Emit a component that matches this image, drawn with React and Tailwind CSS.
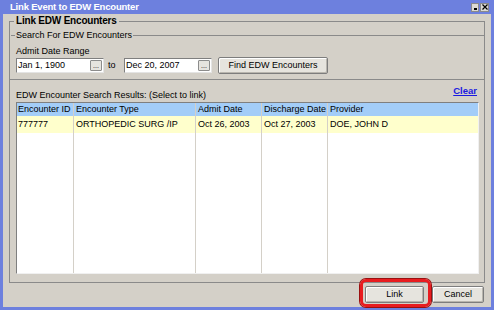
import { useState } from "react";

const font = { fontFamily: '"Liberation Sans", Arial, sans-serif' };

function DateField({ value }) {
  return (
    <div className="flex h-[15px] w-[88px] items-stretch border border-t-[#7f7f7f] border-l-[#7f7f7f] border-r-[#e4e4e4] border-b-[#e4e4e4] bg-white">
      <span className="flex-1 pl-[1px] leading-[13px]">{value}</span>
      <span className="my-[1px] mr-[1px] flex w-[12px] items-center justify-center rounded-[1px] border border-[#8c8c8c] bg-[#e6e4df] text-[7px] leading-none">
        ...
      </span>
    </div>
  );
}

function Btn({ children, className = "" }) {
  return (
    <button
      className={
        "h-[17px] rounded-[2px] border border-[#7d7d7d] bg-[#e6e4de] text-center text-[9px] leading-[15px] text-black shadow-[inset_1px_1px_0_#fff,inset_-1px_-1px_0_#b8b5ae] " +
        className
      }
    >
      {children}
    </button>
  );
}

const columns = [
  { label: "Encounter ID", value: "777777", w: "w-[57px] pl-[1px]" },
  { label: "Encounter Type", value: "ORTHOPEDIC SURG /IP", w: "w-[122px] pl-[2px]" },
  { label: "Admit Date", value: "Oct 26, 2003", w: "w-[66px] pl-[2px]" },
  { label: "Discharge Date", value: "Oct 27, 2003", w: "w-[66px] pl-[2px]" },
  { label: "Provider", value: "DOE, JOHN D", w: "flex-1 pl-[2px]" },
];

export default function App() {
  const [selected, setSelected] = useState(0);

  return (
    <div
      className="flex h-[310px] w-[494px] flex-col bg-[#6d80de] px-[3px] pb-[3px] text-[9px] text-black"
      style={font}
    >
      {/* title bar */}
      <div className="flex h-[14px] items-center justify-between pl-[7px] pr-[2px]">
        <span className="text-[9.5px] font-bold tracking-[-0.2px] text-white">
          Link Event to EDW Encounter
        </span>
        <div className="flex gap-[1px]">
          <span className="flex h-[9px] w-[8px] items-end justify-center border border-[#8a8a8a] bg-[#dcdad4] pb-[1px]">
            <span className="h-[2px] w-[3px] bg-black" />
          </span>
          <span className="flex h-[9px] w-[9px] items-center justify-center border border-[#8a8a8a] bg-[#dcdad4]">
            <svg width="6" height="6" viewBox="0 0 6 6">
              <path d="M0.5 0.5 L5.5 5.5 M5.5 0.5 L0.5 5.5" stroke="#000" strokeWidth="1.2" />
            </svg>
          </span>
        </div>
      </div>

      {/* body */}
      <div className="flex flex-1 flex-col bg-[#d4d0c8] px-[6px]">
        <fieldset className="m-0 flex min-w-0 flex-1 flex-col border border-[#8a8a8a] pb-[8px] pl-[6px] pr-[5px]">
          <legend className="-ml-[2px] px-[2px] text-[10px] font-bold leading-[14px] tracking-[-0.2px]">
            Link EDW Encounters
          </legend>

          <div className="-ml-[5px] -mr-[5px] mt-[1px] flex h-[13px] items-center">
            <div className="h-px w-[4px] bg-[#8a8a8a]" />
            <span className="px-[1px]">Search For EDW Encounters</span>
            <div className="h-px flex-1 bg-[#8a8a8a]" />
          </div>

          <div className="mt-[3px] h-[12px] leading-[12px]">Admit Date Range</div>

          <div className="flex h-[17px] items-center">
            <DateField value="Jan 1, 1900" />
            <span className="ml-[4px] w-[16px]">to</span>
            <DateField value="Dec 20, 2007" />
            <Btn className="ml-[6px] w-[110px]">Find EDW Encounters</Btn>
          </div>

          <div className="-ml-[6px] -mr-[5px] mt-[5px] h-px bg-[#8a8a8a]" />

          <div className="flex h-[22px] justify-between">
            <span className="mb-[1px] self-end leading-[12px]">
              EDW Encounter Search Results: (Select to link)
            </span>
            <a className="mr-[2px] mt-[5px] self-start text-[9.5px] font-bold leading-[12px] text-[#1a1ae0] underline">
              Clear
            </a>
          </div>

          <div className="flex flex-1 border border-t-[#7f7f7f] border-l-[#7f7f7f] border-r-[#f0f0f0] border-b-[#f0f0f0] bg-white">
            {columns.map((c, i) => (
              <div
                key={c.label}
                className={"flex flex-col " + (i < 4 ? "border-r border-[#d4d0c8] " : "") + c.w.split(" ")[0]}
              >
                <div className={"h-[13px] whitespace-nowrap bg-[#a3cdf8] leading-[13px] " + c.w.split(" ")[1]}>
                  {c.label}
                </div>
                <div
                  onClick={() => setSelected(0)}
                  className={
                    "h-[17px] whitespace-nowrap leading-[17px] " +
                    (selected === 0 ? "bg-[#ffffcc] " : "") +
                    c.w.split(" ")[1]
                  }
                >
                  {c.value}
                </div>
                <div className="flex-1" />
              </div>
            ))}
          </div>
        </fieldset>

        <div className="mb-[4px] mr-[1px] mt-[3px] flex justify-end gap-[8px]">
          <div className="relative">
            <Btn className="w-[59px]">Link</Btn>
            <span className="pointer-events-none absolute -bottom-[4px] -left-[5px] -right-[7px] -top-[7px] rounded-[6px] border-[3px] border-[#e81c20] shadow-[0_0_0_1px_#9a1010]" />
          </div>
          <Btn className="w-[52px]">Cancel</Btn>
        </div>
      </div>
    </div>
  );
}
